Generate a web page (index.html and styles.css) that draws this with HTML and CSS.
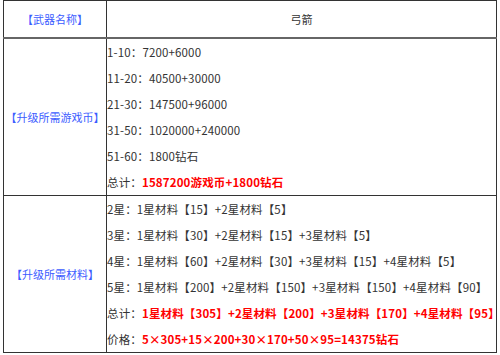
FILE: index.html
```html
<!DOCTYPE html>
<html lang="zh">
<head>
<meta charset="utf-8">
<link rel="stylesheet" href="styles.css">
</head>
<body>
<table class="grid">
  <colgroup><col class="c-label"><col class="c-value"></colgroup>
  <tr class="head">
    <td class="label">【武器名称】</td>
    <td class="title">弓箭</td>
  </tr>
  <tr class="body-row">
    <td class="label">【升级所需游戏币】</td>
    <td class="value">
      <div class="line">1-10：7200+6000</div>
      <div class="line">11-20：40500+30000</div>
      <div class="line">21-30：147500+96000</div>
      <div class="line">31-50：1020000+240000</div>
      <div class="line">51-60：1800钻石</div>
      <div class="line">总计：<span class="red">1587200游戏币+1800钻石</span></div>
    </td>
  </tr>
  <tr class="body-row">
    <td class="label">【升级所需材料】</td>
    <td class="value">
      <div class="line">2星：1星材料【15】+2星材料【5】</div>
      <div class="line">3星：1星材料【30】+2星材料【15】+3星材料【5】</div>
      <div class="line">4星：1星材料【60】+2星材料【30】+3星材料【15】+4星材料【5】</div>
      <div class="line">5星：1星材料【200】+2星材料【150】+3星材料【150】+4星材料【90】</div>
      <div class="line">总计：<span class="red">1星材料【305】+2星材料【200】+3星材料【170】+4星材料【95】</span></div>
      <div class="line">价格：<span class="red">5×305+15×200+30×170+50×95=14375钻石</span></div>
    </td>
  </tr>
</table>
</body>
</html>
```
FILE: styles.css
```css
html, body {
  margin: 0;
  padding: 0;
  background: #ffffff;
}
body {
  font-family: "Noto Sans CJK SC", "Noto Sans", sans-serif;
  font-size: 11.5px;
  letter-spacing: 0.15px;
  color: #333333;
}
.grid {
  margin-left: 3px;
  width: 494px;
  border-collapse: collapse;
  border: 1px solid #333333;
  table-layout: fixed;
}
.c-label { width: 103px; }
.grid td {
  border: 1px solid #333333;
  padding: 0;
  vertical-align: middle;
}
.head td {
  height: 36px;
  border-bottom: 2px solid #666666;
}
.label {
  text-align: center;
  color: #3c5cff;
  font-size: 11px;
  letter-spacing: 0;
}
.title {
  text-align: center;
  color: #333333;
  font-size: 11px;
  letter-spacing: 0;
}
.value {
  text-align: left;
  white-space: nowrap;
}
.line {
  line-height: 26px;
  height: 26px;
}
.red {
  color: #ff0000;
  font-weight: bold;
}
```
